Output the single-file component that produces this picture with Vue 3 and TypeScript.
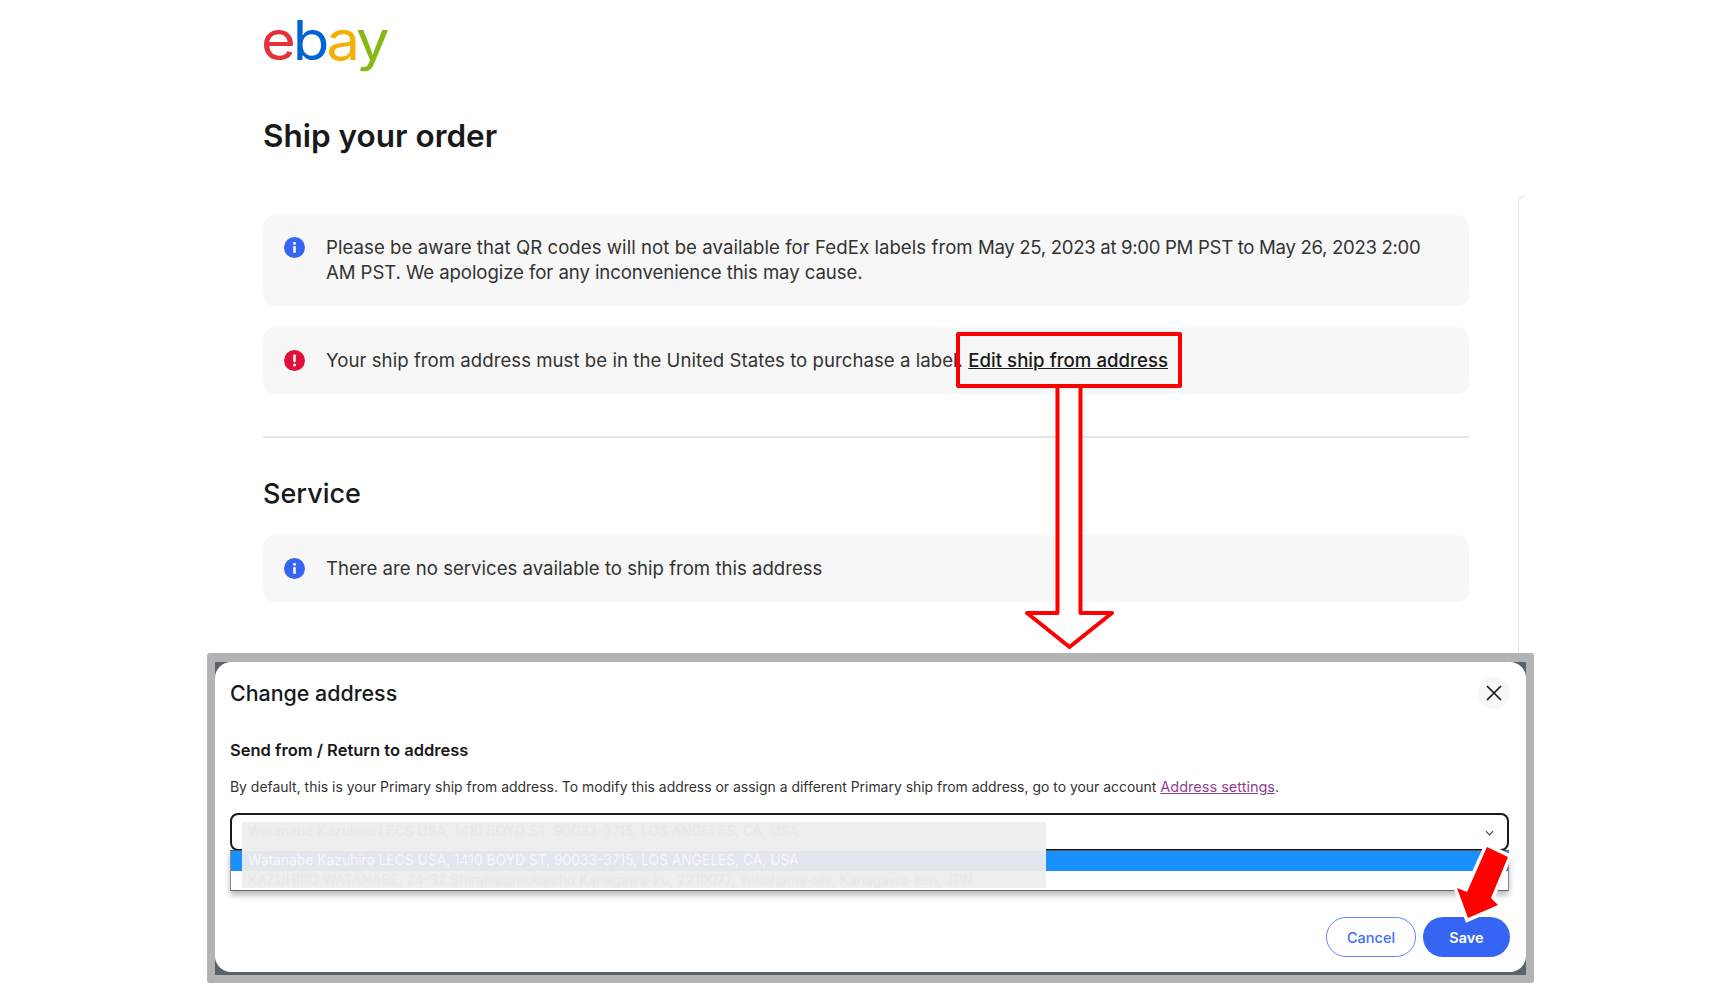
<script setup lang="ts">
interface Option { text: string; active: boolean }
const options: Option[] = [
  { text: 'Watanabe Kazuhiro LECS USA, 1410 BOYD ST, 90033-3715, LOS ANGELES, CA, USA', active: true },
  { text: 'KAZUHIRO WATANABE, 24-32 Shirahatamukaicho Kanagawa-ku, 2210077, Yokohama-shi, Kanagawa-ken, JPN', active: false },
]
</script>

<template>
  <div class="page">
    <div class="top">
      <main class="content">
        <div class="logo" aria-label="eBay"><span class="e">e</span><span class="b">b</span><span class="a">a</span><span class="y">y</span></div>
        <h1 class="title">Ship your order</h1>

        <div class="alert first">
          <svg class="status" viewBox="0 0 21 21"><circle cx="10.5" cy="10.5" r="10.5" fill="#3665f3"/><circle cx="10.5" cy="6.2" r="1.5" fill="#fff"/><rect x="9.2" y="9" width="2.6" height="7" rx="1.1" fill="#fff"/></svg>
          <p>Please be aware that QR codes will not be available for FedEx labels from <span class="dates">May 25, 2023 at 9:00 PM PST to May 26, 2023 2:00</span> <span class="tail">AM PST. We apologize for any inconvenience this may cause.</span></p>
        </div>
        <div class="alert second">
          <svg class="status" viewBox="0 0 21 21"><circle cx="10.5" cy="10.5" r="10.5" fill="#e0103a"/><rect x="9.2" y="4.6" width="2.6" height="7.6" rx="1.1" fill="#fff"/><circle cx="10.5" cy="15" r="1.5" fill="#fff"/></svg>
          <p>Your ship from address must be in the United States to purchase a label. <a class="edit" href="#">Edit ship from address</a></p>
        </div>

        <hr class="divider" />
        <h2 class="section">Service</h2>

        <div class="alert">
          <svg class="status" viewBox="0 0 21 21"><circle cx="10.5" cy="10.5" r="10.5" fill="#3665f3"/><circle cx="10.5" cy="6.2" r="1.5" fill="#fff"/><rect x="9.2" y="9" width="2.6" height="7" rx="1.1" fill="#fff"/></svg>
          <p>There are no services available to ship from this address</p>
        </div>
      </main>
      <aside class="rail"></aside>
    </div>

    <section class="frame">
      <div class="backdrop">
        <div class="card">
          <header class="card-head">
            <h3>Change address</h3>
            <button class="close" aria-label="Close">
              <svg viewBox="0 0 16 16" width="16" height="16"><path d="M1 1l14 14M15 1L1 15" stroke="#191919" stroke-width="1.7" fill="none"/></svg>
            </button>
          </header>
          <div class="label">Send from / Return to address</div>
          <p class="desc">By default, this is your Primary ship from address. To modify this address or assign a different Primary ship from address, go to your account <a class="settings" href="#">Address settings</a>.</p>

          <div class="select">
            <svg class="chevron" viewBox="0 0 10 6" width="9" height="6"><path d="M1 1l4 4 4-4" stroke="#444" stroke-width="1.3" fill="none"/></svg>
            <div class="listbox">
              <div class="option active"></div>
              <div class="option"></div>
            </div>
            <div class="redact">
              <div class="r-row r-current">{{ options[0].text }}</div>
              <div v-for="o in options" :key="o.text" class="r-row" :class="o.active ? 'r-active' : 'r-plain'">{{ o.text }}</div>
            </div>
          </div>

          <footer class="actions">
            <button class="btn cancel">Cancel</button>
            <button class="btn save">Save</button>
          </footer>
        </div>
      </div>
    </section>

    <svg class="notes" viewBox="0 0 1710 1004" width="1710" height="1004">
      <rect x="958" y="334" width="222" height="52" fill="none" stroke="#ff0000" stroke-width="4" stroke-linejoin="round"/>
      <path d="M1057.5 388V613H1027L1069.5 647L1112 613H1080.5V388" fill="#fff" stroke="#ff0000" stroke-width="4" stroke-linejoin="round"/>
      <path d="M1487 847L1508 857L1491 898L1498 905L1468 918L1457 888L1467 892Z" fill="#ff0000" stroke="#fff" stroke-width="7" stroke-linejoin="miter" paint-order="stroke"/>
    </svg>
  </div>
</template>

<style>
html, body { margin: 0; background: #fff; }
</style>

<style scoped>
.page {
  position: relative;
  width: 1710px;
  height: 1004px;
  overflow: hidden;
  background: #fff;
  font-family: Inter, "Liberation Sans", sans-serif;
  color: #333;
}
.top {
  display: flex;
  height: 653px;
  padding-left: 263px;
}
.content { width: 1206px; flex: none; }
.rail {
  margin: 195px 0 0 49px;
  width: 6px;
  border-left: 1px solid #e5e5e5;
  border-top: 1px solid #e5e5e5;
  border-top-left-radius: 8px;
}
.logo {
  height: 116px;
  margin-left: -2px;
  font-size: 55px;
  line-height: 80px;
  letter-spacing: -3px;
  font-weight: 400;
  transform: scaleX(1.088);
  transform-origin: left top;
}
.e { color: #e53238; }
.b { color: #0064d2; }
.a { color: #f5af02; }
.y { color: #86b817; }
.title {
  margin: 0 0 59px;
  font-size: 31.5px;
  line-height: 40px;
  font-weight: 600;
  color: #191919;
}
.alert {
  display: flex;
  gap: 21px;
  padding: 21px 32px 21px 21px;
  background: #f7f7f7;
  border-radius: 12px;
}
.alert.first { padding: 20px 32px 21px 21px; margin-bottom: 21px; letter-spacing: 0.05px; }
.alert.second { letter-spacing: 0.04px; }
.dates { letter-spacing: -0.32px; }
.tail { letter-spacing: -0.08px; }
.alert p {
  margin: 0;
  font-size: 18.6px;
  line-height: 25px;
}
.status { flex: none; width: 21px; height: 21px; margin-top: 2px; }
.edit { color: #191919; font-weight: 500; }
.divider {
  margin: 42px 0 0;
  border: 0;
  height: 2px;
  background: #e5e5e5;
}
.section {
  margin: 37px 0 22px;
  font-size: 27px;
  line-height: 38px;
  font-weight: 500;
  color: #191919;
}
.frame {
  margin-left: 207px;
  width: 1327px;
  box-sizing: border-box;
  padding: 9px 8px 8px;
  background: #b3b3b3;
  border-radius: 3px;
}
.backdrop { height: 313px; background: #59626a; }
.card {
  height: 310px;
  box-sizing: border-box;
  padding: 15px 16px 15px 15px;
  background: #fff;
  border-radius: 16px;
}
.card-head { display: flex; justify-content: space-between; align-items: center; height: 32px; }
.card-head h3 { margin: 0; font-size: 21.4px; line-height: 32px; font-weight: 500; color: #191919; }
.close {
  display: flex;
  align-items: center;
  justify-content: center;
  width: 32px;
  height: 32px;
  padding: 0;
  border: 0;
  border-radius: 50%;
  background: #f7f7f7;
}
.label { margin-top: 31px; font-size: 16.5px; line-height: 20px; font-weight: 600; color: #191919; }
.desc { margin: 17px 0 0; font-size: 13.94px; line-height: 20px; color: #333; }
.settings { color: #8f3e92; font-size: 14.5px; }
.select {
  position: relative;
  margin-top: 16px;
  width: 1279px;
  height: 38px;
  box-sizing: border-box;
  border: 2px solid #191919;
  border-radius: 8px;
}
.chevron { position: absolute; top: 15px; right: 13px; }
.listbox {
  position: absolute;
  z-index: 1;
  top: 35px;
  left: -2px;
  right: -2px;
  height: 41px;
  box-sizing: border-box;
  border: 1px solid #8a8a8a;
  border-top-color: #555;
  border-bottom-color: #666;
  background: #fff;
  box-shadow: 0 4px 6px rgba(0, 0, 0, 0.28);
}
.option { height: 20px; }
.option.active { background: #1890ff; }
.redact {
  position: absolute;
  z-index: 2;
  top: 7px;
  left: 10px;
  width: 804px;
  display: flex;
  flex-direction: column;
  font-size: 13.8px;
  white-space: nowrap;
}
.r-row { padding-left: 6px; box-sizing: border-box; }
.r-current { height: 29px; line-height: 18px; background: #eee; color: #e8e8e8; }
.r-active { height: 20px; line-height: 19px; background: #e1e6ef; color: #f7f8fb; }
.r-plain { height: 17px; line-height: 18px; background: #eee; color: #e8e8e8; }
.actions { display: flex; justify-content: flex-end; gap: 7px; margin-top: 66px; }
.btn {
  height: 40px;
  border-radius: 20px;
  font-family: inherit;
  font-size: 14.5px;
  font-weight: 500;
  padding: 0;
}
.cancel { width: 90px; background: #fff; border: 1.5px solid #5f87f5; color: #3f6ef3; }
.save { width: 87px; background: #3665f3; border: 0; color: #fff; font-weight: 600; }
.notes { position: absolute; top: 0; left: 0; z-index: 5; pointer-events: none; }
</style>
